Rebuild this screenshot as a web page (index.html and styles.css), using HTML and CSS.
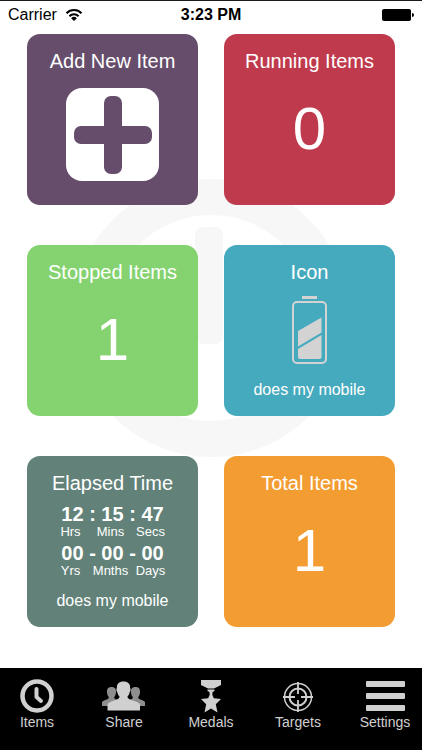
FILE: index.html
```
<!DOCTYPE html>
<html lang="en">
<head>
    <meta charset="UTF-8">
    <meta name="viewport" content="width=device-width, initial-scale=1.0">
    <title>Elapsed Time Tracker</title>
    <link rel="stylesheet" href="styles.css">
</head>
<body>

<!-- Status bar -->
<header class="status-bar">
    <div class="carrier">
        <span>Carrier</span>
        <svg width="18" height="14" viewBox="0 0 18 14" aria-hidden="true">
            <g fill="none" stroke="#000" stroke-width="2">
                <path d="M1.5 5.2a10.6 10.6 0 0 1 15 0"/>
                <path d="M4.4 8.2a6.6 6.6 0 0 1 9.2 0"/>
            </g>
            <path d="M9 13 6.1 10.2a4.2 4.2 0 0 1 5.8 0z"/>
        </svg>
    </div>
    <time class="clock">3:23 PM</time>
    <svg class="battery" width="32" height="14" viewBox="0 0 32 14" aria-hidden="true">
        <rect x="0" y="1" width="29" height="12" rx="2"/>
        <path d="M30 5a2 2 0 0 1 0 4z"/>
    </svg>
</header>

<!-- Dashboard tiles -->
<main class="dashboard">
    <svg class="watermark" width="278" height="278" viewBox="0 0 278 278" aria-hidden="true">
        <circle cx="139" cy="139" r="121" fill="none" stroke="#f7f7f7" stroke-width="36"/>
        <rect x="123" y="48" width="28" height="117" rx="8" fill="#f7f7f7"/>
    </svg>

    <button type="button" class="tile add">
        <span class="tile-title">Add New Item</span>
        <svg class="plus" width="93" height="93" viewBox="0 0 93 93" aria-hidden="true">
            <rect width="93" height="93" rx="16" fill="#fff"/>
            <rect x="38" y="8" width="18" height="78" rx="7" fill="#654d6b"/>
            <rect x="8" y="38" width="78" height="18" rx="7" fill="#654d6b"/>
        </svg>
    </button>

    <button type="button" class="tile running">
        <span class="tile-title">Running Items</span>
        <span class="count">0</span>
    </button>

    <button type="button" class="tile stopped">
        <span class="tile-title">Stopped Items</span>
        <span class="count">1</span>
    </button>

    <button type="button" class="tile icon">
        <span class="tile-title">Icon</span>
        <svg class="item-icon" width="36" height="69" viewBox="0 0 36 69" aria-hidden="true">
            <rect x="10" y="0" width="15" height="3" fill="#d3d3d3"/>
            <rect x="1" y="6" width="33" height="61" rx="4" fill="none" stroke="#d3d3d3" stroke-width="2"/>
            <path d="M6 35 29.5 21.5V36.500L6 50.500z" fill="#d3d3d3"/>
            <path d="M6 53 29.5 39V61a2 2 0 0 1-2 2H8a2 2 0 0 1-2-2z" fill="#d3d3d3"/>
        </svg>
        <span class="note">does my mobile</span>
    </button>

    <button type="button" class="tile elapsed">
        <span class="tile-title">Elapsed Time</span>
        <span class="timer">
            <span class="digits">12 : 15 : 47</span>
            <span class="units"><span>Hrs</span><span>Mins</span><span>Secs</span></span>
        </span>
        <span class="timer">
            <span class="digits">00 - 00 - 00</span>
            <span class="units"><span>Yrs</span><span>Mnths</span><span>Days</span></span>
        </span>
        <span class="note">does my mobile</span>
    </button>

    <button type="button" class="tile total">
        <span class="tile-title">Total Items</span>
        <span class="count">1</span>
    </button>
</main>

<!-- Tab bar -->
<nav class="tab-bar">
    <button type="button" class="tab">
        <svg width="34" height="34" viewBox="0 0 34 34" aria-hidden="true">
            <circle cx="17" cy="17" r="14.5" fill="none" stroke="#d0d0d0" stroke-width="4.5"/>
            <path d="M16.5 10v8l4.5 4" fill="none" stroke="#d0d0d0" stroke-width="4" stroke-linecap="round" stroke-linejoin="round"/>
        </svg>
        <span>Items</span>
    </button>
    <button type="button" class="tab">
        <svg width="44" height="34" viewBox="0 0 44 34" aria-hidden="true">
            <g fill="#8e8e8e">
                <path d="M0 27v-3.500c0-1.500 2-2 4-2.800 2-.7 2.800-1.200 2.800-2.700-1-1-1.500-2.200-1.700-4C4.500 10 6 8 9.500 8s5 2 4.400 6c-.2 1.800-.7 3-1.700 4 0 1.500.8 2 2.800 2.700V27z"/>
                <path d="M43 27v-3.500c0-1.500-2-2-4-2.800-2-.7-2.800-1.200-2.800-2.700 1-1 1.500-2.200 1.700-4C38.500 10 37 8 33.500 8s-5 2-4.400 6c.2 1.800.7 3 1.700 4 0 1.500-.8 2-2.800 2.700V27z"/>
            </g>
            <path fill="#d0d0d0" d="M5.500 31.500v-5c0-3 3-3.600 6-4.700 3.500-1.300 6-1.800 6-4.300-1.300-1.200-1.800-2.500-2.200-4.500-1-.3-1.200-3.500-.4-4C14.500 5 17 2.500 21.500 2.500S28.500 5 28.100 9c.8.5.6 3.700-.4 4-.4 2-.9 3.300-2.200 4.500 0 2.500 2.500 3 6 4.300 3 1.100 6.500 1.700 6.500 4.700v5z"/>
        </svg>
        <span>Share</span>
    </button>
    <button type="button" class="tab">
        <svg width="22" height="34" viewBox="0 0 22 34" aria-hidden="true">
            <g fill="#d0d0d0">
                <path d="M1 1h20v5l-7 3.500H8L1 6z"/>
                <path d="M7.500 10.500h7v1.500l-2 1v2h-3v-2l-2-1z"/>
                <path d="M11 12.500 13.800 19.200 21 20l-5.200 5.200L17.500 33.500 11 29.500 4.500 33.500 6.200 25.200 1 20l7.200-.8z"/>
            </g>
        </svg>
        <span>Medals</span>
    </button>
    <button type="button" class="tab">
        <svg width="30" height="34" viewBox="0 0 30 34" aria-hidden="true">
            <g fill="none" stroke="#d0d0d0">
                <circle cx="15" cy="18" r="13.5" stroke-width="1.5"/>
                <circle cx="15" cy="18" r="8.500" stroke-width="2"/>
                <path d="M15 3v12M15 21v12M0 18h12M18 18h12" stroke-width="1.8"/>
            </g>
        </svg>
        <span>Targets</span>
    </button>
    <button type="button" class="tab">
        <svg width="39" height="34" viewBox="0 0 39 34" aria-hidden="true">
            <g fill="#d0d0d0">
                <rect y="2" width="39" height="6" rx="1"/>
                <rect y="14" width="39" height="6" rx="1"/>
                <rect y="26" width="39" height="6" rx="1"/>
            </g>
        </svg>
        <span>Settings</span>
    </button>
</nav>

</body>
</html>
```
FILE: styles.css
```
* {
    box-sizing: border-box;
}

body {
    font-family: "Liberation Sans", Arial, sans-serif;
    background: #fff;
    color: #000;
    display: flex;
    flex-direction: column;
    min-height: 100vh;
    margin: 0;
}

button {
    font: inherit;
    border: none;
    padding: 0;
    cursor: pointer;
}

/* Status bar */
.status-bar {
    display: grid;
    grid-template-columns: 1fr auto 1fr;
    align-items: center;
    height: 34px;
    padding: 0 8px 6px;
    border-top: 1px solid #1a1a1a;
    font-size: 16px;
}

.carrier {
    display: flex;
    align-items: center;
    gap: 8px;
}

.clock {
    font-weight: 700;
}

.battery {
    justify-self: end;
}

/* Dashboard */
.dashboard {
    position: relative;
    flex: 1;
    display: grid;
    grid-template-columns: 1fr 1fr;
    align-content: start;
    gap: 40px 26px;
    padding: 0 27px 40px;
}

/* Faint clock behind the tiles */
.watermark {
    position: absolute;
    top: 145px;
    left: 50%;
    transform: translateX(-50%);
}

.tile {
    position: relative;
    display: flex;
    flex-direction: column;
    align-items: center;
    aspect-ratio: 1;
    padding: 15px 0 16px;
    border-radius: 13px;
    color: #fff;
}

.add { background: #654d6b; }
.running { background: #bf3a4c; }
.stopped { background: #85d370; }
.icon { background: #46aabe; }
.elapsed { background: #628279; }
.total { background: #f39c32; }

.tile-title {
    font-size: 20px;
    line-height: 24px;
}

.count {
    margin-top: 26px;
    font-size: 60px;
    line-height: 60px;
}

.plus {
    margin-top: 15px;
}

.item-icon {
    margin-top: 12px;
}

.note {
    margin-top: auto;
    font-size: 16px;
    line-height: 20px;
}

/* Elapsed time */
.timer {
    display: flex;
    flex-direction: column;
    align-items: center;
    margin-top: 3px;
}

.tile-title + .timer {
    margin-top: 8px;
}

.digits {
    font-size: 20px;
    font-weight: 700;
    line-height: 22px;
}

.units {
    display: grid;
    grid-template-columns: repeat(3, 40px);
    padding-right: 4px;
    font-size: 13px;
    line-height: 14px;
}

/* Tab bar */
.tab-bar {
    display: flex;
    justify-content: space-between;
    padding: 11px 7px 18px;
    background: #000;
}

.tab {
    display: flex;
    flex-direction: column;
    align-items: center;
    width: 60px;
    background: none;
    color: #d0d0d0;
    font-size: 14px;
    line-height: 19px;
}
```
